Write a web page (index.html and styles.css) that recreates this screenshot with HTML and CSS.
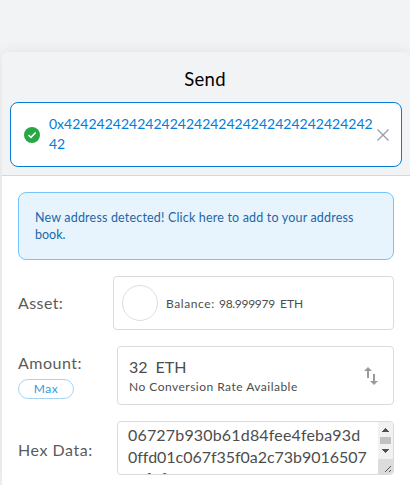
FILE: index.html
```
<!DOCTYPE html>
<html lang="en">
<head>
<meta charset="utf-8">
<title>Send</title>
<link rel="stylesheet" href="styles.css">
</head>
<body>
<main class="card">
  <header class="header">
    <h1 class="title"><span>Send</span></h1>
    <div class="recipient">
      <svg class="check" viewBox="0 0 16 16"><circle cx="8" cy="8" r="8" fill="#28a745"/><path d="M4.500 8.200 7 10.400 11.700 5.500" fill="none" stroke="#fff" stroke-width="1.6"/></svg>
      <div class="address"><span>0x42424242424242424242424242424242424242</span><br><span>42</span></div>
      <svg class="close" viewBox="0 0 12 12"><path d="M.5.5 11.5 11.5M11.5.5.5 11.5" stroke="#9b9caa" stroke-width="1.3"/></svg>
    </div>
  </header>
  <section class="form">
    <div class="notice"><span class="notice-first">New address detected! Click here to add to your address</span><br><span>book.</span></div>
    <div class="row row-asset">
      <div class="label"><span class="label-asset">Asset:</span></div>
      <div class="field asset"><i class="token"></i><span class="balance">Balance:</span><span class="balance-value">98.999979</span><span class="balance-unit">ETH</span></div>
    </div>
    <div class="row row-amount">
      <div class="label"><span class="label-amount">Amount:</span><button class="max"><span>Max</span></button></div>
      <div class="field amount">
        <div><div class="value"><span>32</span><span>ETH</span></div><div class="rate"><span>No Conversion Rate Available</span></div></div>
        <svg class="swap" viewBox="0 0 14 18"><path d="M4 0 0 4h3v7h2V4h3zM9 7v7H6l4 4 4-4h-3V7z" fill="#989a9b"/></svg>
      </div>
    </div>
    <div class="row row-hex">
      <div class="label"><span class="label-hex">Hex Data:</span></div>
      <div class="field hex">
        <div class="hex-text"><div class="hex-one">06727b930b61d84fee4feba93d</div><div class="hex-two">0ffd01c067f35f0a2c73b9016507</div><div class="hex-three">acfef</div></div>
        <svg class="scroll" viewBox="0 0 15 52" shape-rendering="crispEdges"><path d="M0 0h15v52H0z" fill="#f1f1f1"/><path d="M0 37h15v15H0z" fill="#dcdcdc"/><path d="M2 15h11v7H2z" fill="#c1c1c1"/><path d="M4 10h7L7.500 6zM4 27h7l-3.500 4z" fill="#505050"/><path d="m7 50 6-6M11 50l2-2" stroke="#555" fill="none"/></svg>
      </div>
    </div>
  </section>
</main>
</body>
</html>
```
FILE: styles.css
```
* { box-sizing: border-box; }
body { margin: 0; height: 485px; overflow: hidden; padding: 52px 0 0 2px; background: #f2f3f4; font-family: Lato, sans-serif; color: #4d4d4d; }
.card { height: 433px; background: #fff; border-radius: 8px 8px 0 0; box-shadow: 0 0 14px rgba(0,0,0,.08); overflow: hidden; }
.header { height: 124px; background: #f2f3f4; border-bottom: 1px solid #d2d8dd; padding: 14px 8px 0; }
.title { margin: 0; height: 36px; line-height: 26px; font-size: 18.500px; font-weight: 400; color: #000; text-align: center; letter-spacing: .3px; padding-right: 2px; }
.recipient { height: 65px; border: 1px solid #037dd6; border-radius: 8px; background: #fff; display: flex; align-items: center; padding: 0 12px 0 13px; }
.check { width: 16px; height: 16px; flex: none; }
.address { margin: -2px 0 0 9px; width: 328px; flex: none; font-size: 14px; line-height: 20px; color: #037dd6; white-space: nowrap; }
.close { width: 12px; height: 12px; flex: none; }
.form { padding: 16px 16px 0; }
.notice { height: 68px; border: 1px solid #75c4fd; border-radius: 8px; background: #e8f4fd; padding: 16px; font-size: 12.500px; line-height: 17px; color: #1b67a7; white-space: nowrap; }
.notice-first { letter-spacing: .18px; }
.row { display: flex; justify-content: space-between; margin-top: 16px; }
.label { font-size: 16px; line-height: 24px; color: #5b5b5b; white-space: nowrap; }
.label-asset { letter-spacing: .4px; }
.label-amount { letter-spacing: .5px; }
.label-hex { letter-spacing: .55px; }
.field { border: 1px solid #d9dbdc; border-radius: 4px; background: #fff; }
.row-asset { align-items: center; }
.asset { width: 281px; height: 54px; display: flex; align-items: center; padding-left: 8px; font-size: 12px; white-space: nowrap; }
.token { width: 36px; height: 36px; border: 1px solid #dedede; border-radius: 50%; margin-right: 8px; flex: none; }
.balance { width: 53px; letter-spacing: .6px; }
.balance-value { width: 61px; letter-spacing: -.3px; }
.row-amount .label { padding-top: 5px; display: flex; flex-direction: column; }
.max { width: 56px; height: 20px; margin-top: 4px; padding: 0 0 1px; border: 1px solid #a8d4f3; border-radius: 10px; background: #fff; color: #2f9ae0; font: 12px/17px Lato, sans-serif; letter-spacing: .6px; }
.amount { width: 277px; height: 59px; display: flex; align-items: center; justify-content: space-between; padding: 0 15px 0 11px; }
.value { display: flex; gap: 8px; font-size: 16px; line-height: 22px; margin-top: 0; }
.rate { font-size: 12px; line-height: 18px; letter-spacing: .48px; white-space: nowrap; }
.swap { width: 14px; height: 18px; }
.row-hex .label { padding-top: 17px; }
.hex { width: 277px; height: 54px; display: flex; justify-content: space-between; overflow: hidden; }
.hex-text { padding: 1px 0 0 10px; font-size: 16px; line-height: 23px; white-space: nowrap; }
.hex-one { letter-spacing: .17px; }
.hex-two { letter-spacing: -.03px; margin-top: -1px; }
.hex-three { letter-spacing: .8px; margin-top: -2px; }
.scroll { width: 15px; height: 52px; flex: none; }
```
